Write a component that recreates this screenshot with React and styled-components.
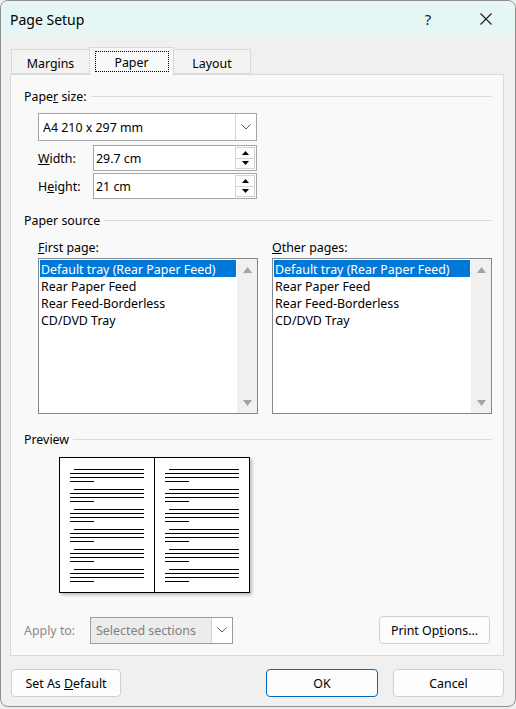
import React from "react";
import styled, { createGlobalStyle } from "styled-components";

const FS = "12.4px";

const GlobalStyle = createGlobalStyle`
  html, body { margin: 0; padding: 0; background: #eeeeee; }
  body { font-family: "Noto Sans", "Open Sans", sans-serif; color: #000; }
  * { box-sizing: border-box; }
`;

const Window = styled.div`
  width: 516px;
  height: 707px;
  border: 1px solid #8f8f8f;
  border-radius: 8px;
  background: #f0f0f0;
  display: flex;
  flex-direction: column;
  overflow: hidden;
`;

const TitleBar = styled.div`
  height: 36px;
  background: #e5f6f4;
  display: flex;
  align-items: center;
  padding-left: 9px;
  flex-shrink: 0;
`;

const Title = styled.div`
  font-size: 14px;
  flex: 1;
  padding-top: 1px;
`;

const TitleButton = styled.div`
  width: ${(p) => p.$w}px;
  height: 36px;
  display: flex;
  align-items: center;
  justify-content: center;
  font-size: 15px;
  color: #1b1b1b;
  margin-right: ${(p) => p.$mr || 0}px;
`;

const TabRow = styled.div`
  height: 37px;
  display: flex;
  align-items: flex-end;
  padding-left: 10px;
  flex-shrink: 0;
  position: relative;
  z-index: 1;
`;

const Tab = styled.div`
  width: ${(p) => p.$w}px;
  height: ${(p) => (p.$active ? 28 : 25)}px;
  margin-bottom: ${(p) => (p.$active ? -1 : 0)}px;
  background: ${(p) => (p.$active ? "#f9f9f9" : "#f3f3f3")};
  border: 1px solid #d9d9d9;
  border-bottom: ${(p) => (p.$active ? "none" : "1px solid #d9d9d9")};
  margin-left: ${(p) => (p.$overlap ? -1 : 0)}px;
  display: flex;
  justify-content: center;
  align-items: ${(p) => (p.$active ? "flex-start" : "center")};
  padding-top: ${(p) => (p.$active ? 3 : 3)}px;
  font-size: ${FS};
`;

const FocusBox = styled.div`
  width: 74px;
  height: 21px;
  border: 1px dotted #000;
  display: flex;
  align-items: center;
  justify-content: center;
  padding-top: 1px;
`;

const Panel = styled.div`
  margin-left: 9px;
  width: 494px;
  height: 582px;
  border: 1px solid #d9d9d9;
  background: #f9f9f9;
  padding: 13px 11px 0 13px;
  display: flex;
  flex-direction: column;
  flex-shrink: 0;
`;

const GroupHeader = styled.div`
  display: flex;
  align-items: center;
  height: 16px;
  font-size: ${FS};
  margin-top: ${(p) => p.$mt || 0}px;
  &::after {
    content: "";
    flex: 1;
    height: 1px;
    background: #dcdcdc;
    margin-left: 4px;
  }
`;

const Indent = styled.div`
  padding-left: 14px;
  margin-top: ${(p) => p.$mt || 0}px;
  display: flex;
  flex-direction: column;
`;

const Combo = styled.div`
  width: ${(p) => p.$w}px;
  height: ${(p) => p.$h}px;
  border: 1px solid ${(p) => (p.$disabled ? "#9c9c9c" : "#a6a6a6")};
  background: ${(p) => (p.$disabled ? "#ececec" : "#fff")};
  display: flex;
  font-size: ${FS};
  color: ${(p) => (p.$disabled ? "#808080" : "#000")};
`;

const ComboText = styled.div`
  flex: 1;
  display: flex;
  align-items: center;
  padding-left: ${(p) => p.$pl}px;
  padding-top: 1px;
`;

const ComboButton = styled.div`
  width: 21px;
  border-left: 1px solid #d4d4d4;
  background: #fff;
  display: flex;
  align-items: center;
  justify-content: center;
`;

const FieldRow = styled.div`
  display: flex;
  align-items: center;
  margin-top: ${(p) => p.$mt}px;
  font-size: ${FS};
`;

const FieldLabel = styled.div`
  width: 55px;
  padding-top: 1px;
`;

const SpinBox = styled.div`
  width: 164px;
  height: 26px;
  border: 1px solid #a6a6a6;
  background: #fff;
  display: flex;
`;

const SpinText = styled.div`
  flex: 1;
  display: flex;
  align-items: center;
  padding-left: 2px;
  padding-top: 1px;
`;

const SpinCol = styled.div`
  width: 21px;
  display: flex;
  flex-direction: column;
  padding: 1px 1px 1px 0;
`;

const SpinBtn = styled.div`
  flex: 1;
  border: 1px solid #d4d4d4;
  background: #fdfdfd;
  display: flex;
  align-items: center;
  justify-content: center;
  & + & { border-top: none; }
`;

const Columns = styled.div`
  display: grid;
  grid-template-columns: 220px 220px;
  column-gap: 14px;
  margin-top: 11px;
  padding-left: 14px;
`;

const Column = styled.div`
  display: flex;
  flex-direction: column;
`;

const SmallLabel = styled.div`
  height: 16px;
  font-size: ${FS};
  display: flex;
  align-items: center;
  padding-top: 1px;
`;

const ListBox = styled.div`
  margin-top: 3px;
  height: 156px;
  border: 1px solid #828790;
  background: #fff;
  display: flex;
`;

const Items = styled.div`
  flex: 1;
  padding: 1px;
`;

const Item = styled.div`
  height: 17px;
  font-size: ${FS};
  padding-left: 1px;
  padding-top: 1px;
  display: flex;
  align-items: center;
  white-space: nowrap;
  background: ${(p) => (p.$selected ? "#0078d7" : "transparent")};
  color: ${(p) => (p.$selected ? "#fff" : "#000")};
`;

const ScrollTrack = styled.div`
  width: 20px;
  background: #f0f0f0;
  display: flex;
  flex-direction: column;
  justify-content: space-between;
  align-items: center;
  padding: 8px 0 7px;
`;

const Book = styled.div`
  margin: 10px 0 0 35px;
  width: 191px;
  height: 136px;
  line-height: 0;
  box-shadow: 2px 2px 3px rgba(0, 0, 0, 0.25);
`;

const ApplyRow = styled.div`
  display: flex;
  align-items: center;
  margin-top: 23px;
  font-size: ${FS};
`;

const ApplyLabel = styled.div`
  width: 66px;
  color: #8a8a8a;
  padding-top: 1px;
`;

const Spacer = styled.div`
  flex: 1;
`;

const Button = styled.div`
  width: ${(p) => p.$w}px;
  height: 28px;
  border: 1px solid ${(p) => (p.$primary ? "#0067c0" : "#d0d0d0")};
  border-radius: 4px;
  background: #fdfdfd;
  font-size: ${FS};
  display: flex;
  align-items: center;
  justify-content: center;
  padding-top: 1px;
  margin-left: ${(p) => p.$ml || 0}px;
  margin-right: ${(p) => p.$mr || 0}px;
`;

const Footer = styled.div`
  display: flex;
  padding: 13px 11px 0 10px;
`;

const Chevron = () => (
  <svg width="10" height="6" viewBox="0 0 10 6">
    <path d="M0.5 0.5 L5 5 L9.5 0.5" fill="none" stroke="#5a5a5a" strokeWidth="1" />
  </svg>
);

const Tri = ({ up, color = "#000", w = 7, h = 4 }) => (
  <svg width={w} height={h} viewBox={`0 0 ${w} ${h}`}>
    <polygon points={up ? `0,${h} ${w},${h} ${w / 2},0` : `0,0 ${w},0 ${w / 2},${h}`} fill={color} />
  </svg>
);

const CloseIcon = () => (
  <svg width="12" height="12" viewBox="0 0 12 12">
    <path d="M0.5 0.5 L11.5 11.5 M11.5 0.5 L0.5 11.5" stroke="#1b1b1b" strokeWidth="1.1" />
  </svg>
);

const Page = ({ x }) => {
  const lines = [];
  for (let p = 0; p < 6; p++) {
    const y0 = 12 + p * 20;
    lines.push(<rect key={`${p}a`} x={x + 14} y={y0} width={70} height={1} />);
    lines.push(<rect key={`${p}b`} x={x + 10} y={y0 + 4} width={74} height={1} />);
    lines.push(<rect key={`${p}c`} x={x + 10} y={y0 + 8} width={74} height={1} />);
    lines.push(<rect key={`${p}d`} x={x + 10} y={y0 + 12} width={24} height={1} />);
  }
  return <g fill="#000">{lines}</g>;
};

const BookPreview = () => (
  <Book>
    <svg width="191" height="136" viewBox="0 0 191 136">
      <rect x="0.5" y="0.5" width="190" height="135" fill="#fff" stroke="#000" />
      <rect x="95" y="0" width="1" height="136" fill="#000" />
      <Page x={1} />
      <Page x={96} />
    </svg>
  </Book>
);

const items = [
  "Default tray (Rear Paper Feed)",
  "Rear Paper Feed",
  "Rear Feed-Borderless",
  "CD/DVD Tray",
];

const SourceList = ({ label }) => (
  <Column>
    <SmallLabel>{label}</SmallLabel>
    <ListBox>
      <Items>
        {items.map((t, i) => (
          <Item key={t} $selected={i === 0}>
            {t}
          </Item>
        ))}
      </Items>
      <ScrollTrack>
        <Tri up color="#a3a3a3" w={9} h={6} />
        <Tri color="#a3a3a3" w={9} h={6} />
      </ScrollTrack>
    </ListBox>
  </Column>
);

const Spin = ({ value }) => (
  <SpinBox>
    <SpinText>{value}</SpinText>
    <SpinCol>
      <SpinBtn>
        <Tri up />
      </SpinBtn>
      <SpinBtn>
        <Tri />
      </SpinBtn>
    </SpinCol>
  </SpinBox>
);

export default function App() {
  return (
    <>
      <GlobalStyle />
      <Window>
        <TitleBar>
          <Title>Page Setup</Title>
          <TitleButton $w={40} $mr={15}>?</TitleButton>
          <TitleButton $w={46} $mr={6}>
            <CloseIcon />
          </TitleButton>
        </TitleBar>
        <TabRow>
          <Tab $w={79}>Margins</Tab>
          <Tab $w={85} $active $overlap>
            <FocusBox>Paper</FocusBox>
          </Tab>
          <Tab $w={78} $overlap>Layout</Tab>
        </TabRow>
        <Panel>
          <GroupHeader>
            Pape<u>r</u>&nbsp;size:
          </GroupHeader>
          <Indent $mt={9}>
            <Combo $w={219} $h={28}>
              <ComboText $pl={4}>A4 210 x 297 mm</ComboText>
              <ComboButton>
                <Chevron />
              </ComboButton>
            </Combo>
            <FieldRow $mt={4}>
              <FieldLabel>
                <u>W</u>idth:
              </FieldLabel>
              <Spin value="29.7 cm" />
            </FieldRow>
            <FieldRow $mt={2}>
              <FieldLabel>
                H<u>e</u>ight:
              </FieldLabel>
              <Spin value="21 cm" />
            </FieldRow>
          </Indent>
          <GroupHeader $mt={13}>Paper source</GroupHeader>
          <Columns>
            <SourceList
              label={
                <span>
                  <u>F</u>irst page:
                </span>
              }
            />
            <SourceList
              label={
                <span>
                  <u>O</u>ther pages:
                </span>
              }
            />
          </Columns>
          <GroupHeader $mt={17}>Preview</GroupHeader>
          <BookPreview />
          <ApplyRow>
            <ApplyLabel>Apply to:</ApplyLabel>
            <Combo $w={143} $h={27} $disabled>
              <ComboText $pl={5}>Selected sections</ComboText>
              <ComboButton>
                <Chevron />
              </ComboButton>
            </Combo>
            <Spacer />
            <Button $w={111} $mr={2}>
              Print Op<u>t</u>ions...
            </Button>
          </ApplyRow>
        </Panel>
        <Footer>
          <Button $w={110}>
            Set As&nbsp;<u>D</u>efault
          </Button>
          <Spacer />
          <Button $w={112} $primary>
            OK
          </Button>
          <Button $w={111} $ml={15}>
            Cancel
          </Button>
        </Footer>
      </Window>
    </>
  );
}
